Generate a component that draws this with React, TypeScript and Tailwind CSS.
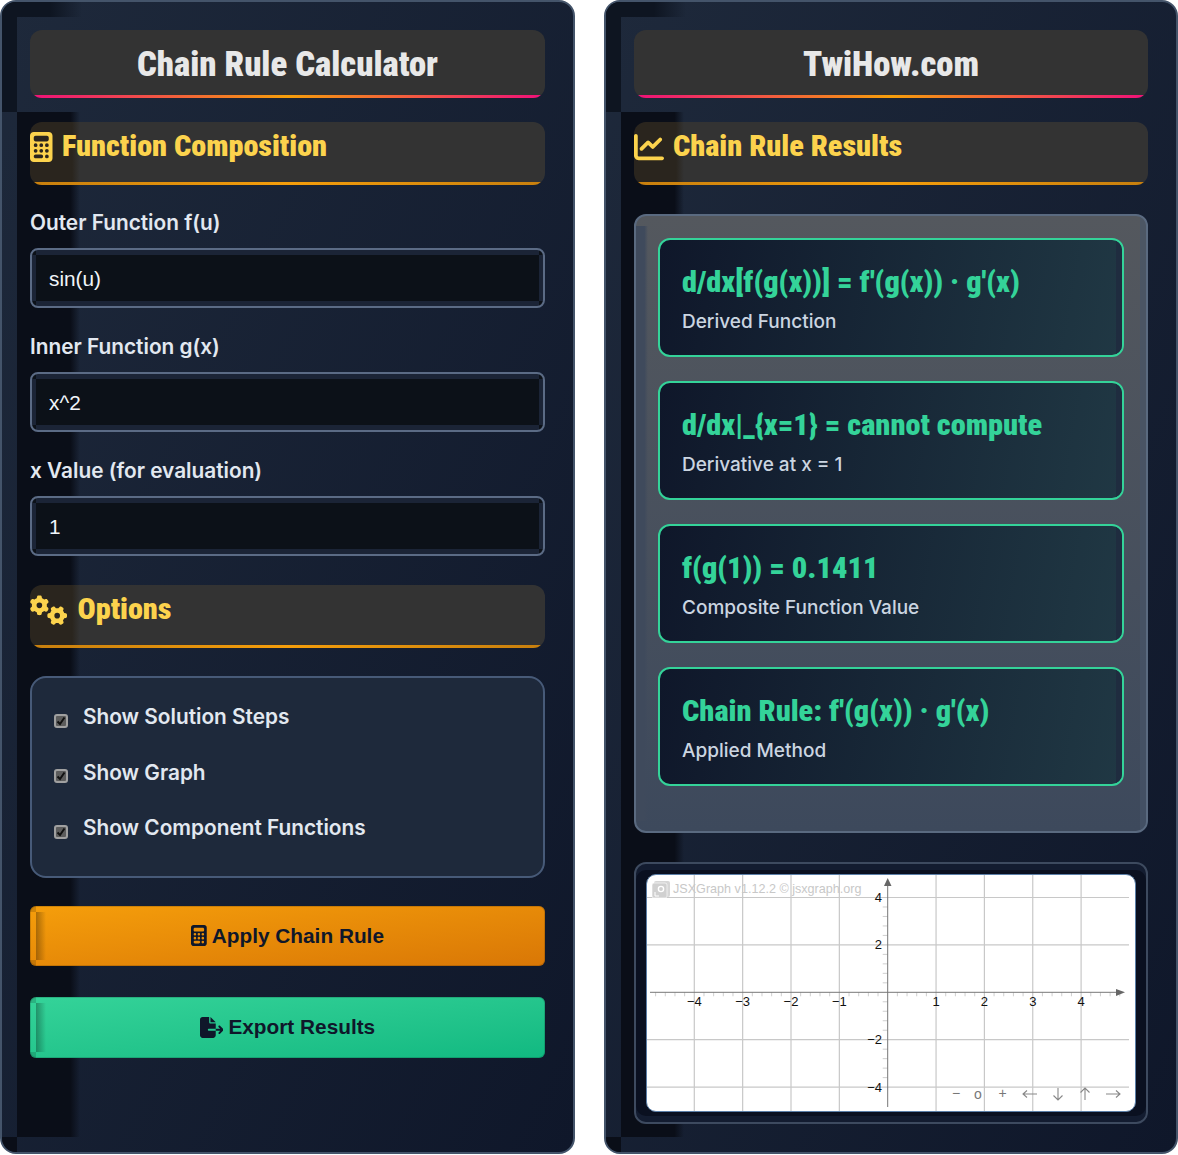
import React from "react";
import { FaCalculator, FaChartLine, FaFileExport, FaGears } from "react-icons/fa6";

const condensed = "font-['Roboto',sans-serif] font-black [font-stretch:75%]";
const inputBands =
  "[background:linear-gradient(#1b2436,#1b2436)_center_top/calc(100%-8px)_5px_no-repeat,linear-gradient(#1b2436,#1b2436)_center_bottom/calc(100%-8px)_5px_no-repeat,linear-gradient(#1b2436,#1b2436)_left_center/4px_calc(100%-10px)_no-repeat,linear-gradient(#1b2436,#1b2436)_right_center/4px_calc(100%-10px)_no-repeat,#0c1118]";

function PanelShade() {
  return (
    <>
      <div className="absolute left-0 top-0 h-[15px] w-[80px] bg-gradient-to-r from-[#0e1521] from-60% to-transparent" />
      <div className="absolute left-0 top-0 h-[110px] w-[15px] bg-[#0e1521]" />
      <div className="absolute bottom-[15px] left-[15px] top-[110px] w-[63px] bg-gradient-to-r from-[#0a0e18] from-85% to-transparent" />
      <div className="absolute bottom-0 left-0 h-[15px] w-[15px] bg-[#0a0e18]" />
    </>
  );
}

function TitleCard({ children }: { children: React.ReactNode }) {
  return (
    <div className="relative mb-[24px] flex h-[68px] items-center justify-center overflow-hidden rounded-xl bg-[#333333] pt-[1px]">
      <h1 className={`${condensed} text-[34.7px] leading-none text-[#e8e8e8]`}>{children}</h1>
      <div className="absolute bottom-0 left-0 right-0 h-[3px] bg-[linear-gradient(90deg,#f0107a,#f59e0b,#f0107a)]" />
    </div>
  );
}

function SectionHeading({ icon, gap, children }: { icon: React.ReactNode; gap: string; children: React.ReactNode }) {
  return (
    <div className={`relative flex h-[63px] items-start overflow-hidden rounded-xl bg-[linear-gradient(90deg,#2a251e_0,#2a251e_42px,#333333_50px)] pt-[1px] ${gap}`}>
      <span className="mt-[9px] text-[#fcd34d]">{icon}</span>
      <h2 className={`${condensed} text-[30.2px] leading-[46px] text-[#fcd34d]`}>{children}</h2>
      <div className="absolute bottom-0 left-0 right-0 h-[3px] bg-[linear-gradient(90deg,#c77f0e,#f59e0b,#c77f0e)]" />
    </div>
  );
}

function Field({ label, value }: { label: string; value: string }) {
  return (
    <div className="mb-[22px]">
      <label className="mb-[9px] block text-[20.8px] font-semibold leading-[33px] text-[#e2e8f0]">{label}</label>
      <input
        readOnly
        defaultValue={value}
        className={`box-border h-[60px] w-full rounded-lg border-2 border-[#5b6b85] px-[17px] pt-[1px] font-['Liberation_Sans',sans-serif] text-[20.8px] text-[#f1f5f9] outline-none ${inputBands}`}
      />
    </div>
  );
}

function OptionRow({ label }: { label: string }) {
  return (
    <label className="flex h-[55.5px] items-center pl-[22px]">
      <span className="mt-[8px] flex h-[14px] w-[14px] items-center justify-center rounded-[3px] border-2 border-[#a0a0a0] bg-[#5c5c5c]">
        <svg viewBox="0 0 10 10" className="h-[10px] w-[10px]">
          <path d="M1.5 5.5 L4 8 L8.5 1.5" fill="none" stroke="#111111" strokeWidth="2" />
        </svg>
      </span>
      <span className="ml-[15px] text-[20.8px] font-semibold text-[#e2e8f0]">{label}</span>
    </label>
  );
}

function ActionButton({ icon, label, tone }: { icon: React.ReactNode; label: string; tone: string }) {
  return (
    <button className={`relative flex w-full items-center justify-center gap-[5px] overflow-hidden rounded-md font-['Liberation_Sans',sans-serif] text-[20.8px] font-bold text-[#0f172a] shadow-[inset_0_0_0_1px_rgba(0,0,0,0.15)] ${tone}`}>
      <span className="absolute bottom-[6px] left-[6px] top-[6px] w-[10px] bg-gradient-to-r from-black/30 to-transparent" />
      <span className="absolute left-0 top-0 h-[6px] w-[6px] bg-black/15" />
      <span className="absolute bottom-0 left-0 h-[6px] w-[6px] bg-black/15" />
      {icon}
      {label}
    </button>
  );
}

function ResultCard({ value, label }: { value: string; label: string }) {
  return (
    <div className="relative h-[119px] overflow-hidden rounded-xl border-2 border-[#34d399] bg-[linear-gradient(100deg,#0f172a,#203844)] pl-[22px] pt-[19px]">
      <div className="absolute bottom-0 right-0 top-0 w-[6px] bg-[#1f2c3f]" />
      <div className={`${condensed} relative text-[30.3px] leading-[46px] text-[#34d399]`}>{value}</div>
      <div className="relative mt-[2px] text-[19px] font-medium leading-[30px] text-[#cbd5e1]">{label}</div>
    </div>
  );
}

function Graph() {
  const ox = 240.7;
  const oy = 117.3;
  const ux = 48.35;
  const uy = 23.7;
  const xs = [-4, -3, -2, -1, 1, 2, 3, 4];
  const ys = [-4, -2, 2, 4];
  const minorX: number[] = [];
  for (let i = -49; i <= 49; i++) if (i % 10 !== 0 && i % 2 === 0) minorX.push(i / 10);
  const minorY: number[] = [];
  for (let i = -4; i <= 4; i += 0.4) if (Math.abs(i % 2) > 0.01 && Math.abs(Math.abs(i % 2) - 2) > 0.01) minorY.push(i);
  return (
    <svg viewBox="0 0 488 236" className="block h-[236px] w-[488px] font-['Liberation_Sans',sans-serif]">
      {xs.map((v) => (
        <line key={v} x1={ox + v * ux} x2={ox + v * ux} y1={0} y2={236} stroke="#c8c8c8" strokeWidth="1.2" />
      ))}
      {ys.map((v) => (
        <line key={v} x1={0} x2={482} y1={oy - v * uy} y2={oy - v * uy} stroke="#c8c8c8" strokeWidth="1.2" />
      ))}
      {minorX.map((v) => (
        <line key={v} x1={ox + v * ux} x2={ox + v * ux} y1={oy} y2={oy + 4} stroke="#cfcfcf" />
      ))}
      {minorY.map((v) => (
        <line key={v} x1={ox - 5} x2={ox} y1={oy - v * uy} y2={oy - v * uy} stroke="#cfcfcf" />
      ))}
      <line x1={3} x2={471} y1={oy} y2={oy} stroke="#777777" />
      <line x1={ox} x2={ox} y1={9} y2={232} stroke="#777777" />
      <polygon points="478,117.3 469,114 469,121" fill="#666666" />
      <polygon points="240.7,3 237,11 244.5,11" fill="#666666" />
      {xs.map((v) => (
        <text key={v} x={ox + v * ux} y={oy + 13.5} textAnchor="middle" fontSize="13" fill="#111111">
          {v < 0 ? `−${-v}` : v}
        </text>
      ))}
      {ys.map((v) => (
        <text key={v} x={235} y={oy - v * uy + 4.5} textAnchor="end" fontSize="13" fill="#111111">
          {v < 0 ? `−${-v}` : v}
        </text>
      ))}
      <rect x="7" y="6" width="16" height="16" rx="2" fill="#d6d6d6" />
      <rect x="5" y="8" width="15" height="15" rx="2" fill="#d0d0d0" stroke="#ffffff" strokeWidth="0.6" />
      <circle cx="14" cy="14" r="2.6" fill="none" stroke="#ffffff" strokeWidth="1.4" />
      <path d="M8 21 V17 M8 21 H12" stroke="#ffffff" strokeWidth="1" />
      <text x="26" y="17.5" fontSize="12.6" fill="#c8c8c8">JSXGraph v1.12.2 © jsxgraph.org</text>
      <g fill="#777777" fontSize="14" textAnchor="middle">
        <text x="309" y="223">−</text>
        <text x="331" y="224">o</text>
        <text x="355.5" y="223">+</text>
      </g>
      <g fill="none" stroke="#888888" strokeWidth="1.1">
        <path d="M376 219 H390 M380 215.5 L376 219 L380 222.5" />
        <path d="M411 213 V225 M406.5 220.5 L411 225 L415.5 220.5" />
        <path d="M438 225 V213 M433.5 217.5 L438 213 L442.5 217.5" />
        <path d="M459 219 H473 M469 215.5 L473 219 L469 222.5" />
      </g>
    </svg>
  );
}

export default function App() {
  return (
    <div className="grid h-[1155px] grid-cols-[575px_574px] gap-[29px] bg-white pb-[1px] font-['Inter',sans-serif]">
      <section className="relative overflow-hidden rounded-2xl border-2 border-[#44546a] bg-gradient-to-br from-[#1e293b] to-[#0f172a]">
        <PanelShade />
        <div className="relative p-[28px]">
          <TitleCard>Chain Rule Calculator</TitleCard>
          <SectionHeading icon={<FaCalculator className="h-[30px] w-[22.5px]" />} gap="gap-[9.5px]">Function Composition</SectionHeading>
          <div className="mt-[21px]">
            <Field label="Outer Function f(u)" value="sin(u)" />
            <Field label="Inner Function g(x)" value="x^2" />
            <Field label="x Value (for evaluation)" value="1" />
          </div>
          <div className="mt-[29px]">
            <SectionHeading icon={<FaGears className="h-[30px] w-[37.5px]" />} gap="gap-[10px]">Options</SectionHeading>
          </div>
          <div className="mt-[28px] rounded-2xl border-2 border-[#475a78] bg-[#1e293b] pb-[20px] pt-[11px]">
            <OptionRow label="Show Solution Steps" />
            <OptionRow label="Show Graph" />
            <OptionRow label="Show Component Functions" />
          </div>
          <div className="mt-[28px] flex flex-col gap-[31px]">
            <ActionButton icon={<FaCalculator className="h-[21px] w-[15.75px]" />} label="Apply Chain Rule" tone="h-[60px] bg-gradient-to-br from-[#f59e0b] to-[#d97706]" />
            <ActionButton icon={<FaFileExport className="h-[21px] w-[23.6px]" />} label="Export Results" tone="h-[61px] bg-gradient-to-br from-[#34d399] to-[#10b981]" />
          </div>
        </div>
      </section>

      <section className="relative overflow-hidden rounded-2xl border-2 border-[#44546a] bg-gradient-to-br from-[#1e293b] to-[#0f172a]">
        <PanelShade />
        <div className="relative p-[28px]">
          <TitleCard>TwiHow.com</TitleCard>
          <SectionHeading icon={<FaChartLine className="h-[30px] w-[30px]" />} gap="gap-[9px]">Chain Rule Results</SectionHeading>
          <div className="relative mt-[29px] h-[619px] overflow-hidden rounded-xl border-2 border-[#5a6a80] bg-gradient-to-b from-[#54585e] to-[#3d495c] pl-[22px] pr-[22px] pt-[22px]">
            <div className="absolute bottom-[10px] left-0 top-[10px] w-[12px] bg-gradient-to-r from-[#3f4a5c] from-70% to-transparent" />
            <div className="absolute bottom-0 right-0 top-0 w-[6px] bg-[#475569]/60" />
            <div className="relative flex flex-col gap-[24px]">
              <ResultCard value="d/dx[f(g(x))] = f'(g(x)) · g'(x)" label="Derived Function" />
              <ResultCard value="d/dx|_{x=1} = cannot compute" label="Derivative at x = 1" />
              <ResultCard value="f(g(1)) = 0.1411" label="Composite Function Value" />
              <ResultCard value="Chain Rule: f'(g(x)) · g'(x)" label="Applied Method" />
            </div>
          </div>
          <div className="relative mt-[29px] h-[262px] rounded-xl border-2 border-[#3d4a5f] bg-[#0a1020] p-[10px] shadow-[inset_0_6px_0_#131c30,inset_0_-6px_0_#131c30]">
            <div className="h-[238px] w-[490px] overflow-hidden rounded-[10px] border border-[#5b7fa8] bg-white">
              <Graph />
            </div>
          </div>
        </div>
      </section>
    </div>
  );
}
